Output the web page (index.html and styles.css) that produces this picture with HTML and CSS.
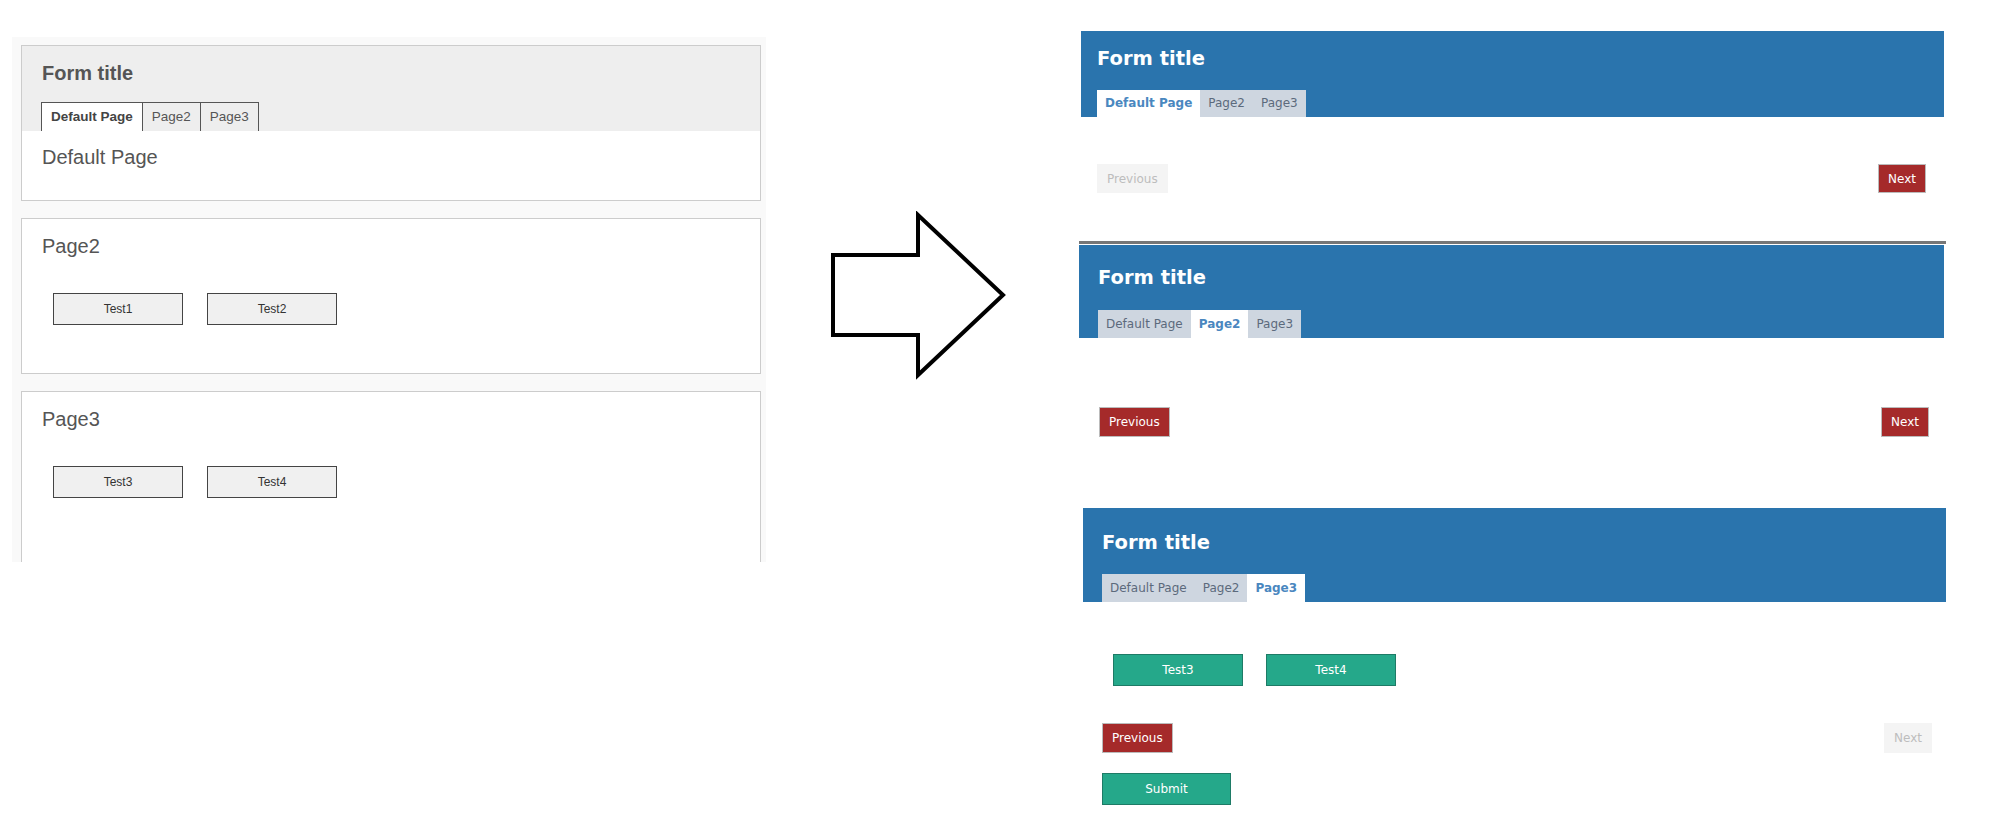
FILE: index.html
```html
<!DOCTYPE html>
<html lang="en">
<head>
    <meta charset="UTF-8">
    <meta name="viewport" content="width=device-width, initial-scale=1.0">
    <title>Form pages preview</title>
    <link rel="stylesheet" href="styles.css">
</head>
<body>
    <div class="canvas">
        <!-- designer view -->
        <div class="designer">
            <section class="d-card">
                <div class="d-head">
                    <h2 class="d-title">Form title</h2>
                    <ul class="d-tabs">
                        <li class="active">Default Page</li>
                        <li>Page2</li>
                        <li>Page3</li>
                    </ul>
                </div>
                <div class="d-page d-page-first">
                    <h3>Default Page</h3>
                </div>
            </section>

            <section class="d-card">
                <div class="d-page">
                    <h3>Page2</h3>
                    <div class="d-buttons">
                        <button class="d-btn">Test1</button>
                        <button class="d-btn">Test2</button>
                    </div>
                </div>
            </section>

            <section class="d-card d-card-last">
                <div class="d-page">
                    <h3>Page3</h3>
                    <div class="d-buttons">
                        <button class="d-btn">Test3</button>
                        <button class="d-btn">Test4</button>
                    </div>
                </div>
            </section>
        </div>

        <svg class="arrow" width="180" height="170" viewBox="0 0 180 170">
            <polygon points="4,44 89,44 89,4 174,84 89,164 89,124 4,124" fill="#fff" stroke="#000" stroke-width="4" stroke-linejoin="miter"/>
        </svg>

        <!-- rendered form -->
        <div class="preview">
            <section class="form form-1">
                <header class="form-head">
                    <h2>Form title</h2>
                    <ul class="tabs">
                        <li class="active">Default Page</li>
                        <li>Page2</li>
                        <li>Page3</li>
                    </ul>
                </header>
                <div class="form-body">
                    <div class="nav">
                        <button class="btn-nav" disabled>Previous</button>
                        <button class="btn-nav">Next</button>
                    </div>
                </div>
            </section>

            <hr class="sep">

            <section class="form form-2">
                <header class="form-head">
                    <h2>Form title</h2>
                    <ul class="tabs">
                        <li>Default Page</li>
                        <li class="active">Page2</li>
                        <li>Page3</li>
                    </ul>
                </header>
                <div class="form-body">
                    <div class="nav">
                        <button class="btn-nav">Previous</button>
                        <button class="btn-nav">Next</button>
                    </div>
                </div>
            </section>

            <section class="form form-3">
                <header class="form-head">
                    <h2>Form title</h2>
                    <ul class="tabs">
                        <li>Default Page</li>
                        <li>Page2</li>
                        <li class="active">Page3</li>
                    </ul>
                </header>
                <div class="form-body">
                    <div class="field-buttons">
                        <button class="btn-green">Test3</button>
                        <button class="btn-green">Test4</button>
                    </div>
                    <div class="nav">
                        <button class="btn-nav">Previous</button>
                        <button class="btn-nav" disabled>Next</button>
                    </div>
                    <button class="btn-green btn-submit">Submit</button>
                </div>
            </section>
        </div>
    </div>
</body>
</html>
```

FILE: styles.css
```css
* {
    box-sizing: border-box;
}
body {
    margin: 0;
    background-color: #ffffff;
    font-family: "Liberation Sans", Arial, sans-serif;
}
.canvas {
    display: flex;
    align-items: flex-start;
}
ul {
    list-style: none;
    margin: 0;
    padding: 0;
}
button {
    font: inherit;
    cursor: pointer;
}

/* designer view */
.designer {
    margin: 37px 0 0 12px;
    width: 754px;
    height: 525px;
    padding: 8px 5px 0 9px;
    background-color: #f9f9f9;
    overflow: hidden;
}
.d-card {
    height: 156px;
    margin-bottom: 17px;
    border: 1px solid #cccccc;
    background-color: #ffffff;
}
.d-card-last {
    height: 220px;
}
.d-head {
    padding: 15px 0 0 19px;
    background-color: #eeeeee;
}
.d-title {
    margin: 0 0 17px 1px;
    font-size: 20px;
    line-height: 24px;
    color: #555555;
}
.d-tabs {
    display: flex;
}
.d-tabs li {
    height: 29px;
    line-height: 28px;
    padding: 0 9px;
    font-size: 13.5px;
    color: #555555;
    border: 1px solid #555555;
    border-bottom: none;
    border-left: none;
}
.d-tabs li:first-child {
    border-left: 1px solid #555555;
}
.d-tabs li.active {
    background-color: #ffffff;
    font-weight: bold;
    color: #444444;
}
.d-page {
    padding: 15px 20px 0 20px;
}
.d-page-first {
    padding-top: 14px;
}
.d-page h3 {
    margin: 0;
    font-size: 20px;
    line-height: 24px;
    font-weight: normal;
    color: #555555;
}
.d-buttons {
    display: flex;
    gap: 24px;
    margin: 35px 0 0 11px;
}
.d-btn {
    width: 130px;
    height: 32px;
    padding: 0;
    font-size: 12px;
    color: #333333;
    background-color: #f0f0f0;
    border: 1px solid #444444;
}

/* arrow */
.arrow {
    display: block;
    flex: none;
    margin: 211px 0 0 63px;
}

/* rendered form */
.preview {
    margin: 31px 0 0 70px;
    width: 867px;
    font-family: "DejaVu Sans", Verdana, sans-serif;
}
.form-head {
    background-color: #2a74ad;
}
.form-head h2 {
    margin: 0 0 20px 0;
    font-size: 19.5px;
    line-height: 24px;
    color: #ffffff;
}
.tabs {
    display: flex;
}
.tabs li {
    height: 28px;
    line-height: 28px;
    padding: 0 8px;
    font-size: 12px;
    color: #5c6a7c;
    background-color: #ced6e0;
}
.tabs li.active {
    background-color: #ffffff;
    color: #4a87bf;
    font-weight: bold;
}
.nav {
    display: flex;
    justify-content: space-between;
}
.btn-nav {
    height: 30px;
    padding: 0 9px;
    font-size: 12px;
    color: #ffffff;
    background-color: #a52a2a;
    border: 1px solid #bbbbbb;
}
.btn-nav:disabled {
    color: #bdbdbd;
    background-color: #f4f4f4;
    border-color: #f4f4f4;
    cursor: default;
}
.btn-green {
    width: 130px;
    height: 32px;
    padding: 0;
    font-size: 12px;
    color: #ffffff;
    background-color: #25a88a;
    border: 1px solid #1e7b66;
}

.form-1 {
    margin: 0 2px;
}
.form-1 .form-head {
    padding: 16px 0 0 16px;
}
.form-1 .form-head h2 {
    margin-bottom: 19px;
}
.form-1 .tabs li {
    height: 27px;
    line-height: 27px;
}
.form-1 .form-body {
    padding: 47px 18px 48px 16px;
}
.form-1 .btn-nav {
    height: 29px;
}

.sep {
    margin: 0 0 1px 0;
    height: 3px;
    border: none;
    background-color: #777777;
}

.form-2 {
    margin-right: 2px;
}
.form-2 .form-head {
    padding: 21px 0 0 19px;
}
.form-2 .form-body {
    padding: 69px 15px 71px 20px;
}

.form-3 {
    margin-left: 4px;
}
.form-3 .form-head {
    padding: 23px 0 0 19px;
}
.form-3 .form-head h2 {
    margin-bottom: 19px;
}
.form-3 .form-body {
    padding: 52px 14px 0 19px;
}
.field-buttons {
    display: flex;
    gap: 23px;
    margin: 0 0 37px 11px;
}
.btn-submit {
    display: block;
    width: 129px;
    margin-top: 20px;
}
```
